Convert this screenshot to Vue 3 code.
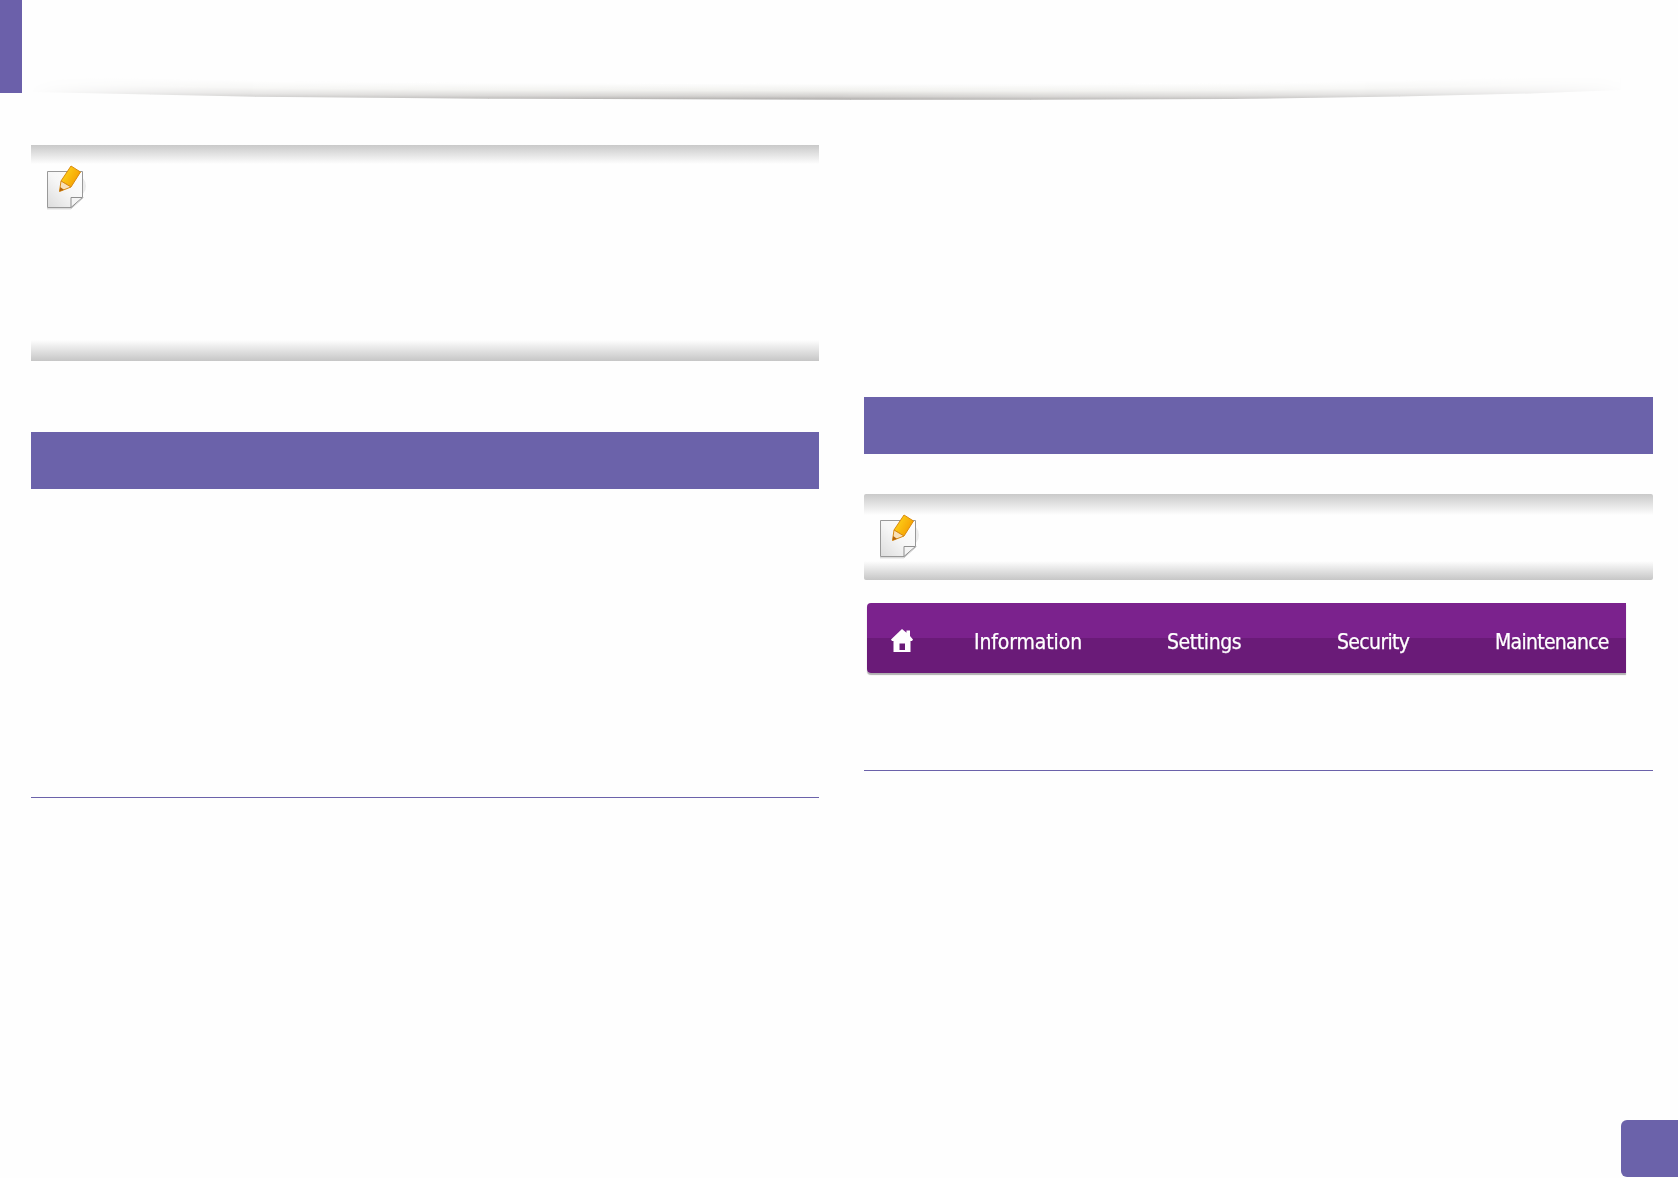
<script setup>
import { computed } from 'vue'

const navItems = [
  { label: 'Information', spacing: -0.12 },
  { label: 'Settings', spacing: -0.4 },
  { label: 'Security', spacing: -0.65 },
  { label: 'Maintenance', spacing: -0.72 }
]

const edge = [
  [2, 10], [120, 12.5], [225, 14.7], [458, 16.7], [820, 17.7],
  [1000, 17.8], [1200, 17], [1369, 14.6], [1500, 11.5], [1590, 8]
]
const depth = 16
const offsetY = 4

const shadeSlices = computed(() =>
  edge.slice(0, -1).map(([x0, y0], i) => {
    const [x1, y1] = edge[i + 1]
    const slope = (y1 - y0) / (x1 - x0)
    const top = y0 + offsetY - depth
    return {
      id: 'shade' + i,
      transform: `matrix(1 ${slope} 0 1 0 ${top - slope * x0})`,
      points: `${x0},${y0 + offsetY - depth} ${x1 + 0.5},${y1 + offsetY - depth} ${x1 + 0.5},${y1 + offsetY} ${x0},${y0 + offsetY}`
    }
  })
)
</script>

<template>
  <div class="page">
    <header class="top">
      <div class="tab"></div>
      <svg class="top-shadow" viewBox="0 0 1600 24" width="1600" height="24" aria-hidden="true">
        <defs>
          <linearGradient
            v-for="s in shadeSlices"
            :id="s.id"
            :key="s.id"
            gradientUnits="userSpaceOnUse"
            x1="0"
            y1="0"
            x2="0"
            :y2="depth"
            :gradientTransform="s.transform"
          >
            <stop offset="0" stop-color="#fefefe" />
            <stop offset="0.45" stop-color="#f0f0ed" />
            <stop offset="0.8" stop-color="#d0cecc" />
            <stop offset="1" stop-color="#acaaa8" />
          </linearGradient>
        </defs>
        <polygon v-for="s in shadeSlices" :key="s.id" :points="s.points" :fill="`url(#${s.id})`" />
      </svg>
    </header>

    <main class="columns">
      <section class="col">
        <div class="note note-tall">
          <svg class="note-icon" viewBox="0 0 44 46" width="44" height="46" aria-hidden="true">
            <defs>
              <linearGradient id="sheet1" x1="0" y1="1" x2="1" y2="0">
                <stop offset="0" stop-color="#dcdcdc" />
                <stop offset="0.5" stop-color="#f6f6f6" />
                <stop offset="1" stop-color="#ffffff" />
              </linearGradient>
              <linearGradient id="pencil1" x1="0" y1="0" x2="1" y2="0.6">
                <stop offset="0" stop-color="#ffe020" />
                <stop offset="1" stop-color="#f59c00" />
              </linearGradient>
            </defs>
            <ellipse cx="35" cy="21" rx="8" ry="10" fill="#ececec" />
            <path d="M4.500 6.500 H39.500 V32 L28 42.500 H4.500 Z" fill="url(#sheet1)" stroke="#999999" />
            <path d="M28 42.500 V32.500 H39.500 Z" fill="#f4f4f4" stroke="#8f8f8f" />
            <path d="M4 43.800 H28 L40.500 32.500" fill="none" stroke="#cccccc" />
            <path d="M18 16 L28 1 L37.500 7 L28 22 Z" fill="url(#pencil1)" stroke="#d98a10" />
            <path d="M18 16 L16.500 26.500 L28 22 Z" fill="#f8e0b8" stroke="#d98a10" />
            <path d="M17.200 22 L16.500 26.500 L21 24.800 Z" fill="#b5650a" />
          </svg>
        </div>
        <div class="bar bar-left"></div>
        <div class="rule rule-left"></div>
      </section>

      <section class="col col-right">
        <div class="bar"></div>
        <div class="note note-short">
          <svg class="note-icon" viewBox="0 0 44 46" width="44" height="46" aria-hidden="true">
            <defs>
              <linearGradient id="sheet2" x1="0" y1="1" x2="1" y2="0">
                <stop offset="0" stop-color="#dcdcdc" />
                <stop offset="0.5" stop-color="#f6f6f6" />
                <stop offset="1" stop-color="#ffffff" />
              </linearGradient>
              <linearGradient id="pencil2" x1="0" y1="0" x2="1" y2="0.6">
                <stop offset="0" stop-color="#ffe020" />
                <stop offset="1" stop-color="#f59c00" />
              </linearGradient>
            </defs>
            <ellipse cx="35" cy="21" rx="8" ry="10" fill="#ececec" />
            <path d="M4.500 6.500 H39.500 V32 L28 42.500 H4.500 Z" fill="url(#sheet2)" stroke="#999999" />
            <path d="M28 42.500 V32.500 H39.500 Z" fill="#f4f4f4" stroke="#8f8f8f" />
            <path d="M4 43.800 H28 L40.500 32.500" fill="none" stroke="#cccccc" />
            <path d="M18 16 L28 1 L37.500 7 L28 22 Z" fill="url(#pencil2)" stroke="#d98a10" />
            <path d="M18 16 L16.500 26.500 L28 22 Z" fill="#f8e0b8" stroke="#d98a10" />
            <path d="M17.200 22 L16.500 26.500 L21 24.800 Z" fill="#b5650a" />
          </svg>
        </div>
        <nav class="nav">
          <svg class="home" viewBox="0 0 22 23" width="22" height="23" aria-hidden="true">
            <path fill-rule="evenodd" fill="#ffffff" d="M11 0 L15.500 3.800 V1.500 H19 V7 L22 10.500 L21 12 H19.500 V23 H2.500 V12 H1 L0 10.500 Z M8.500 14.500 V21 H14 V14.500 Z" />
          </svg>
          <span
            v-for="item in navItems"
            :key="item.label"
            class="nav-item"
            :style="{ letterSpacing: item.spacing + 'px' }"
          >{{ item.label }}</span>
        </nav>
        <div class="rule rule-right"></div>
      </section>
    </main>

    <div class="page-badge"></div>
  </div>
</template>

<style scoped>
.page {
  position: relative;
  width: 1678px;
  height: 1178px;
  overflow: hidden;
  background: #fefefe;
}
.top {
  position: relative;
  height: 145px;
}
.tab {
  width: 22px;
  height: 93px;
  background: #6b60aa;
}
.top-shadow {
  position: absolute;
  left: 30px;
  top: 78px;
  -webkit-mask-image: linear-gradient(90deg, transparent 0, rgba(0,0,0,.5) 14%, rgba(0,0,0,.78) 29%, #000 50%, rgba(0,0,0,.7) 75%, rgba(0,0,0,.45) 85.5%, transparent 100%);
  mask-image: linear-gradient(90deg, transparent 0, rgba(0,0,0,.5) 14%, rgba(0,0,0,.78) 29%, #000 50%, rgba(0,0,0,.7) 75%, rgba(0,0,0,.45) 85.5%, transparent 100%);
}
.columns {
  display: grid;
  grid-template-columns: 788px 789px;
  column-gap: 45px;
  padding-left: 31px;
}
.col {
  display: flex;
  flex-direction: column;
}
.col-right {
  padding-top: 252px;
}
.bar {
  height: 57px;
  background: #6b62aa;
}
.bar-left {
  margin-top: 71px;
}
.note {
  position: relative;
}
.note-tall {
  height: 216px;
  background:
    linear-gradient(#c9c9c9, #fefefe) top / 100% 19px no-repeat,
    linear-gradient(#fefefe, #c6c6c6) bottom / 100% 21px no-repeat,
    #fefefe;
}
.note-short {
  height: 86px;
  margin-top: 40px;
  border-radius: 2px;
  background:
    linear-gradient(#c9c9c9, #fefefe) top / 100% 21px no-repeat,
    linear-gradient(#fefefe, #c6c6c6) bottom / 100% 19px no-repeat,
    #fefefe;
}
.note-icon {
  position: absolute;
  left: 12px;
  top: 20px;
  filter: blur(0.4px);
}
.nav {
  display: grid;
  grid-template-columns: 83px 193px 170px 158px 1fr;
  align-items: center;
  width: 759px;
  height: 70px;
  margin: 23px 0 0 3px;
  padding-left: 24px;
  box-sizing: border-box;
  border-radius: 4px 0 0 4px;
  background: linear-gradient(#7b228d 0, #7b228d 50%, #6a1b78 50%, #6a1b78 100%);
  box-shadow: 0 2px 1px #b0b0b0;
}
.home {
  margin-top: 4px;
  filter: blur(0.3px);
}
.nav-item {
  margin-top: 8px;
  font-family: "DejaVu Sans", sans-serif;
  font-stretch: condensed;
  font-size: 21px;
  line-height: 24px;
  color: #ffffff;
  white-space: nowrap;
  -webkit-text-stroke: 0.25px #ffffff;
  filter: blur(0.35px);
}
.rule {
  height: 1px;
  background: #6b62aa;
}
.rule-left {
  margin-top: 308px;
}
.rule-right {
  margin-top: 97px;
}
.page-badge {
  position: absolute;
  left: 1621px;
  top: 1120px;
  width: 57px;
  height: 57px;
  border-radius: 6px 0 0 6px;
  background: #6b62aa;
}
</style>

<style>
body {
  background: #fefefe;
}
</style>
